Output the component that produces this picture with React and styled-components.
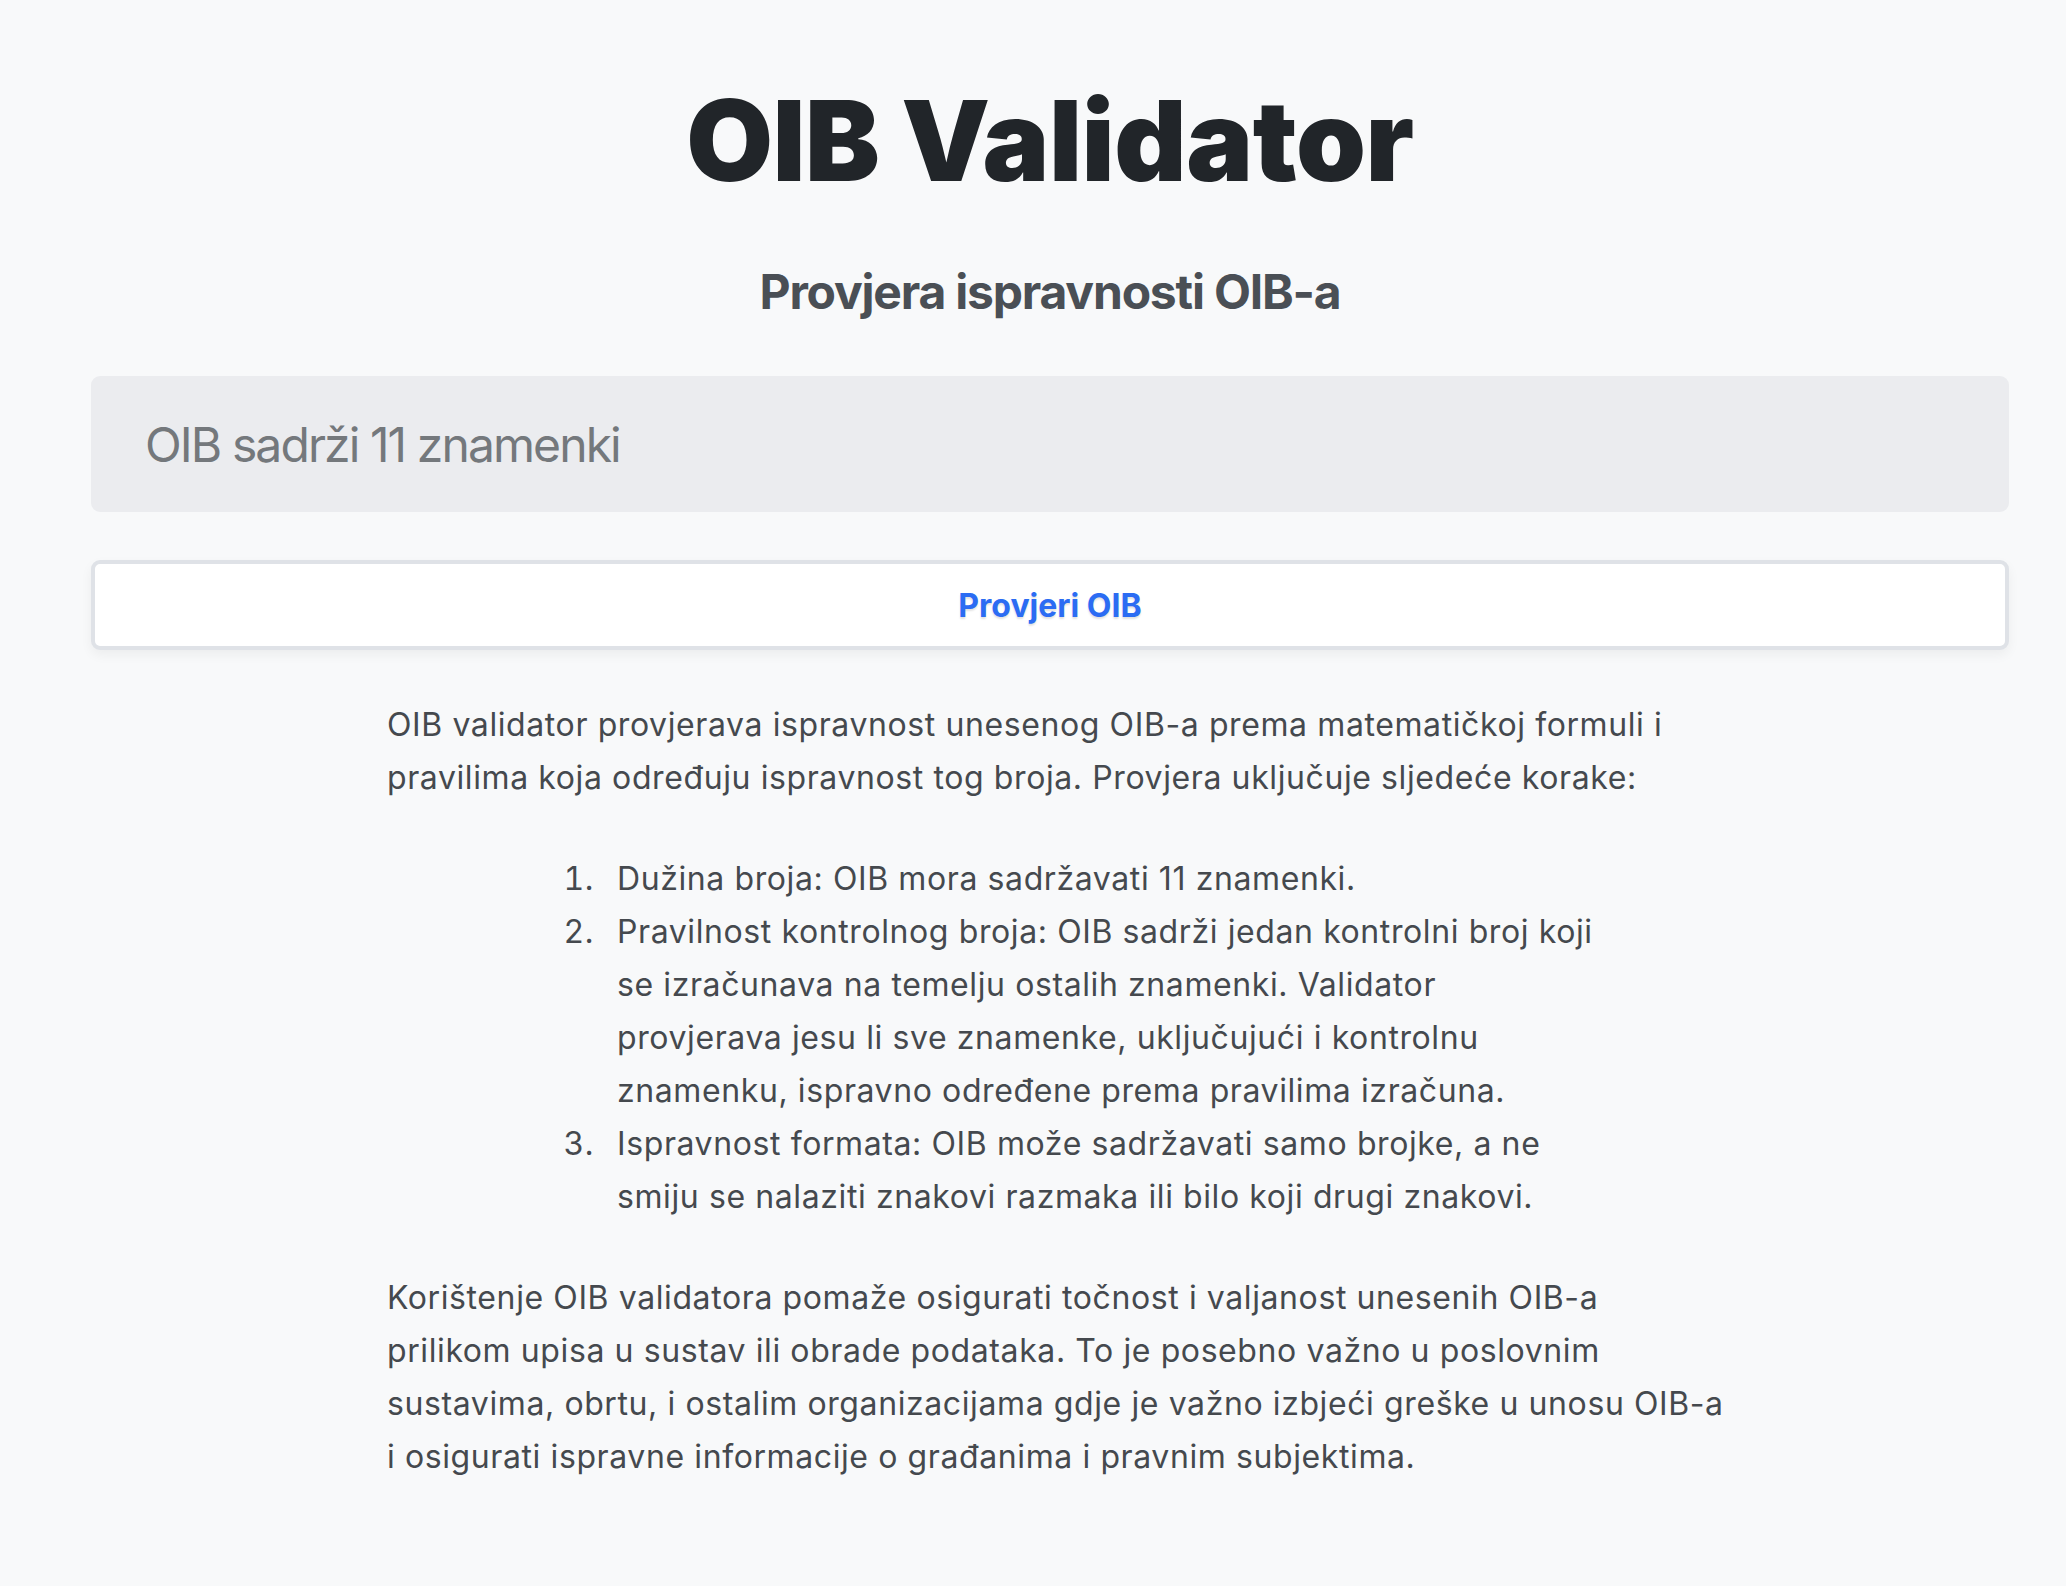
import React from 'react';
import styled, { createGlobalStyle } from 'styled-components';

const GlobalStyle = createGlobalStyle`
  body {
    margin: 0;
    background-color: #f8f9fa;
    font-family: Inter, "Noto Sans", sans-serif;
    color: #45494e;
  }
`;

const Page = styled.main`
  padding: 84px 57px 120px 91px;
`;

const Title = styled.h1`
  margin: 0;
  text-align: center;
  font-size: 112px;
  line-height: 1;
  font-weight: 900;
  letter-spacing: -0.4px;
  color: #212529;
`;

const Subtitle = styled.h2`
  margin: 72px 0 0;
  text-align: center;
  font-size: 48px;
  line-height: 1;
  font-weight: 700;
  letter-spacing: -1.2px;
  color: #4a4f55;
`;

const OibInput = styled.input`
  display: block;
  box-sizing: border-box;
  width: 100%;
  height: 136px;
  margin-top: 60px;
  padding: 0 54px;
  border: none;
  border-radius: 9px;
  background-color: #ebecef;
  font-family: Inter, "Noto Sans", sans-serif;
  font-size: 48px;
  letter-spacing: -1.9px;
  color: #212529;
  outline: none;

  &::placeholder {
    color: #74787c;
  }
`;

const CheckButton = styled.button`
  display: block;
  box-sizing: border-box;
  width: 100%;
  height: 90px;
  margin-top: 48px;
  border: 4px solid #dfe2e7;
  border-radius: 9px;
  background-color: #ffffff;
  box-shadow: 0 5px 12px rgba(0, 0, 0, 0.05);
  font-family: Inter, "Noto Sans", sans-serif;
  font-size: 32px;
  font-weight: 700;
  color: #2b6cf3;
  text-shadow: 0 2px 2px rgba(0, 0, 0, 0.12);
  cursor: pointer;
`;

const Article = styled.section`
  margin: 48px 0 0 296px;
  width: 1339px;
  font-size: 32px;
  line-height: 53px;
  letter-spacing: 0.6px;
`;

const Paragraph = styled.p`
  margin: 0 0 48px;
`;

const Steps = styled.ol`
  margin: 0 0 48px;
  padding: 0 126px 0 230px;

  li::marker {
    content: counter(list-item) ".\\2002\\2009";
  }
`;

export default function App() {
  return (
    <>
      <GlobalStyle />
      <Page>
        <Title>OIB Validator</Title>
        <Subtitle>Provjera ispravnosti OIB-a</Subtitle>
        <OibInput type="text" placeholder="OIB sadrži 11 znamenki" />
        <CheckButton type="button">Provjeri OIB</CheckButton>
        <Article>
          <Paragraph>
            OIB validator provjerava ispravnost unesenog OIB-a prema matematičkoj formuli i
            pravilima koja određuju ispravnost tog broja. Provjera uključuje sljedeće korake:
          </Paragraph>
          <Steps>
            <li>Dužina broja: OIB mora sadržavati 11 znamenki.</li>
            <li>
              Pravilnost kontrolnog broja: OIB sadrži jedan kontrolni broj koji se izračunava na
              temelju ostalih znamenki. Validator provjerava jesu li sve znamenke, uključujući i
              kontrolnu znamenku, ispravno određene prema pravilima izračuna.
            </li>
            <li>
              Ispravnost formata: OIB može sadržavati samo brojke, a ne smiju se nalaziti znakovi
              razmaka ili bilo koji drugi znakovi.
            </li>
          </Steps>
          <Paragraph>
            Korištenje OIB validatora pomaže osigurati točnost i valjanost unesenih OIB-a prilikom
            upisa u sustav ili obrade podataka. To je posebno važno u poslovnim sustavima, obrtu, i
            ostalim organizacijama gdje je važno izbjeći greške u unosu OIB-a i osigurati ispravne
            informacije o građanima i pravnim subjektima.
          </Paragraph>
        </Article>
      </Page>
    </>
  );
}
